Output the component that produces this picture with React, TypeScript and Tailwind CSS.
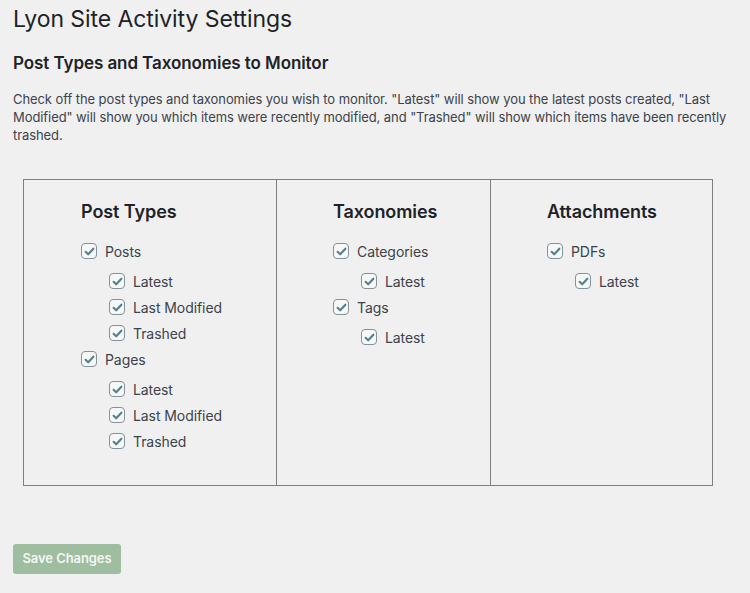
import React from 'react';

type Item = { label: string; children?: string[] };
type Column = { title: string; items: Item[] };

const columns: Column[] = [
  {
    title: 'Post Types',
    items: [
      { label: 'Posts', children: ['Latest', 'Last Modified', 'Trashed'] },
      { label: 'Pages', children: ['Latest', 'Last Modified', 'Trashed'] },
    ],
  },
  {
    title: 'Taxonomies',
    items: [
      { label: 'Categories', children: ['Latest'] },
      { label: 'Tags', children: ['Latest'] },
    ],
  },
  {
    title: 'Attachments',
    items: [{ label: 'PDFs', children: ['Latest'] }],
  },
];

function CheckBox() {
  return (
    <span className="flex h-4 w-4 shrink-0 items-center justify-center rounded-[4px] border border-[#86929a] bg-[#f6f7f7]">
      <svg viewBox="0 0 16 16" className="h-[13px] w-[13px]" fill="none">
        <path d="M3.2 8.4 L6.4 11.4 L12.8 4.6" stroke="#55808e" strokeWidth="2.6" strokeLinecap="round" strokeLinejoin="round" />
      </svg>
    </span>
  );
}

function Row({ label }: { label: string }) {
  return (
    <label className="flex h-[26px] items-center gap-2 text-[14px] text-[#3c434a]">
      <CheckBox />
      <span>{label}</span>
    </label>
  );
}

export default function App() {
  return (
    <div
      className="min-h-[593px] w-[750px] bg-[#f0f0f1] pl-[13px] text-[#3c434a] tracking-[-0.08px]"
      style={{ fontFamily: 'Inter, "Noto Sans", sans-serif' }}
    >
      <h1 className="pt-[5px] text-[23px] leading-[29px] font-normal text-[#1d2327]">Lyon Site Activity Settings</h1>
      <h2 className="mt-[18px] text-[17px] leading-[22px] font-semibold text-[#1d2327]">
        Post Types and Taxonomies to Monitor
      </h2>
      <p className="mt-[16px] w-[725px] text-[13px] leading-[18px]">
        Check off the post types and taxonomies you wish to monitor. "Latest" will show you the latest posts created, "Last
        Modified" will show you which items were recently modified, and "Trashed" will show which items have been recently
        trashed.
      </p>

      <div className="mt-[35px] ml-[10px] grid w-[690px] grid-cols-[252px_214px_1fr] border border-[#7f7f7f]">
        {columns.map((col, i) => (
          <div
            key={col.title}
            className={`pt-[20px] pb-[31px] ${i === 0 ? 'pl-[57px]' : 'border-l border-[#7f7f7f] pl-[56px]'}`}
          >
            <h3 className="text-[18px] leading-[24px] font-semibold text-[#1d2327]">{col.title}</h3>
            <ul className="mt-[14px]">
              {col.items.map((item) => (
                <li key={item.label}>
                  <Row label={item.label} />
                  {item.children && (
                    <ul className="mt-[4px] pl-[28px]">
                      {item.children.map((c) => (
                        <li key={c}>
                          <Row label={c} />
                        </li>
                      ))}
                    </ul>
                  )}
                </li>
              ))}
            </ul>
          </div>
        ))}
      </div>

      <button className="mt-[58px] h-[30px] w-[108px] rounded-[3px] bg-[#9fbd9f] text-[13px] font-semibold text-[#f3f7f3]">
        Save Changes
      </button>
    </div>
  );
}
